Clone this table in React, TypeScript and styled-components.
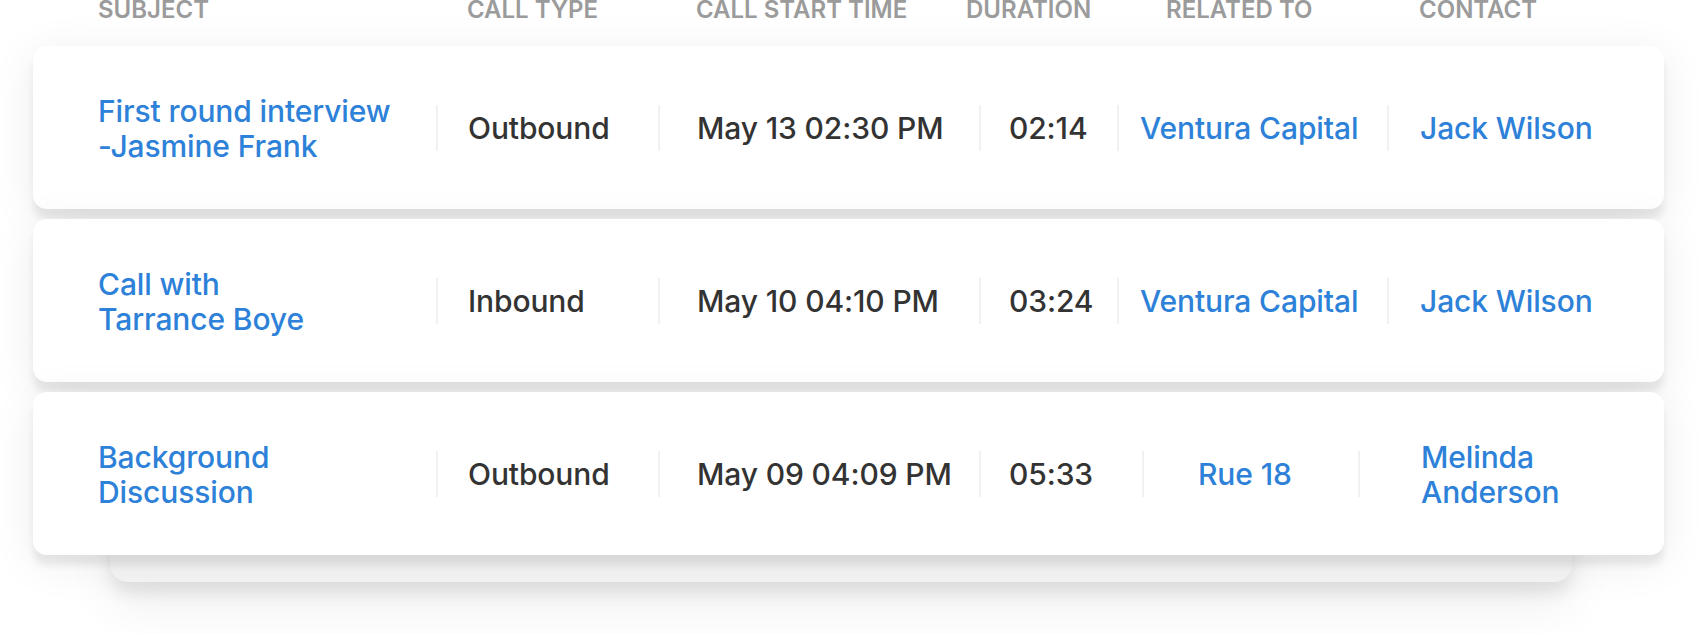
import React from "react";
import styled, { createGlobalStyle } from "styled-components";

const GlobalStyle = createGlobalStyle`
  html, body {
    margin: 0;
    padding: 0;
    background: #ffffff;
  }
  body {
    font-family: Inter, "Noto Sans", "Liberation Sans", sans-serif;
    -webkit-font-smoothing: antialiased;
    overflow: hidden;
  }
  * { box-sizing: border-box; }
`;

const Page = styled.div`
  width: 1705px;
  height: 634px;
  padding-left: 33px;
  overflow: hidden;
`;

const Header = styled.div`
  display: grid;
  grid-template-columns: 369px 229px 270px 200px 253px 1fr;
  padding-left: 65px;
  margin-top: -2px;
  height: 24px;
  width: 1631px;
  font-size: 24px;
  line-height: 24px;
  font-weight: 600;
  color: #9b9b9b;
  text-transform: uppercase;
  white-space: nowrap;
`;

const Stack = styled.div`
  position: relative;
  isolation: isolate;
  margin-top: 24px;
  width: 1631px;
  display: flex;
  flex-direction: column;
  gap: 10px;

  &::after {
    content: "";
    position: absolute;
    left: 77px;
    right: 92px;
    bottom: -27px;
    height: 80px;
    border-radius: 18px;
    background: #f5f5f5;
    z-index: -1;
    box-shadow: 0 12px 16px rgba(0, 0, 0, 0.08), 0 26px 50px rgba(0, 0, 0, 0.06);
  }
`;

const Card = styled.div`
  height: 163px;
  background: #ffffff;
  border-radius: 14px;
  display: flex;
  align-items: center;
  box-shadow: 0 10px 7px rgba(0, 0, 0, 0.075), 0 8px 46px rgba(0, 0, 0, 0.075);
`;

const Cell = styled.div<{ $w?: number; $pl: number }>`
  flex: ${(p) => (p.$w ? `0 0 ${p.$w}px` : "1 1 auto")};
  padding-left: ${(p) => p.$pl}px;
  padding-top: 2px;
  font-size: 30px;
  line-height: 35px;
  font-weight: 500;
  letter-spacing: -0.12px;
  white-space: pre-line;
`;

const Plain = styled.span`
  color: #333333;
`;

const Link = styled.span`
  color: #2d81d8;
`;

const Divider = styled.div`
  flex: 0 0 2px;
  height: 46px;
  background: #f1f1f1;
`;

type CellData = { text: string; link?: boolean; w?: number; pl: number };

const headers = ["Subject", "Call type", "Call start time", "Duration", "Related to", "Contact"];

const rows: CellData[][] = [
  [
    { text: "First round interview\n-Jasmine Frank", link: true, w: 403, pl: 65 },
    { text: "Outbound", w: 220, pl: 30 },
    { text: "May 13 02:30 PM", w: 319, pl: 37 },
    { text: "02:14", w: 136, pl: 28 },
    { text: "Ventura Capital", link: true, w: 268, pl: 21 },
    { text: "Jack Wilson", link: true, pl: 31 },
  ],
  [
    { text: "Call with\nTarrance Boye", link: true, w: 403, pl: 65 },
    { text: "Inbound", w: 220, pl: 30 },
    { text: "May 10 04:10 PM", w: 319, pl: 37 },
    { text: "03:24", w: 136, pl: 28 },
    { text: "Ventura Capital", link: true, w: 268, pl: 21 },
    { text: "Jack Wilson", link: true, pl: 31 },
  ],
  [
    { text: "Background\nDiscussion", link: true, w: 403, pl: 65 },
    { text: "Outbound", w: 220, pl: 30 },
    { text: "May 09 04:09 PM", w: 319, pl: 37 },
    { text: "05:33", w: 161, pl: 28 },
    { text: "Rue 18", link: true, w: 214, pl: 54 },
    { text: "Melinda\nAnderson", link: true, pl: 61 },
  ],
];

export default function App() {
  return (
    <>
      <GlobalStyle />
      <Page>
        <Header>
          {headers.map((h) => (
            <span key={h}>{h}</span>
          ))}
        </Header>
        <Stack>
          {rows.map((row, i) => (
            <Card key={i}>
              {row.map((c, j) => (
                <React.Fragment key={j}>
                  {j > 0 && <Divider />}
                  <Cell $w={c.w} $pl={c.pl}>
                    {c.link ? <Link>{c.text}</Link> : <Plain>{c.text}</Plain>}
                  </Cell>
                </React.Fragment>
              ))}
            </Card>
          ))}
        </Stack>
      </Page>
    </>
  );
}
